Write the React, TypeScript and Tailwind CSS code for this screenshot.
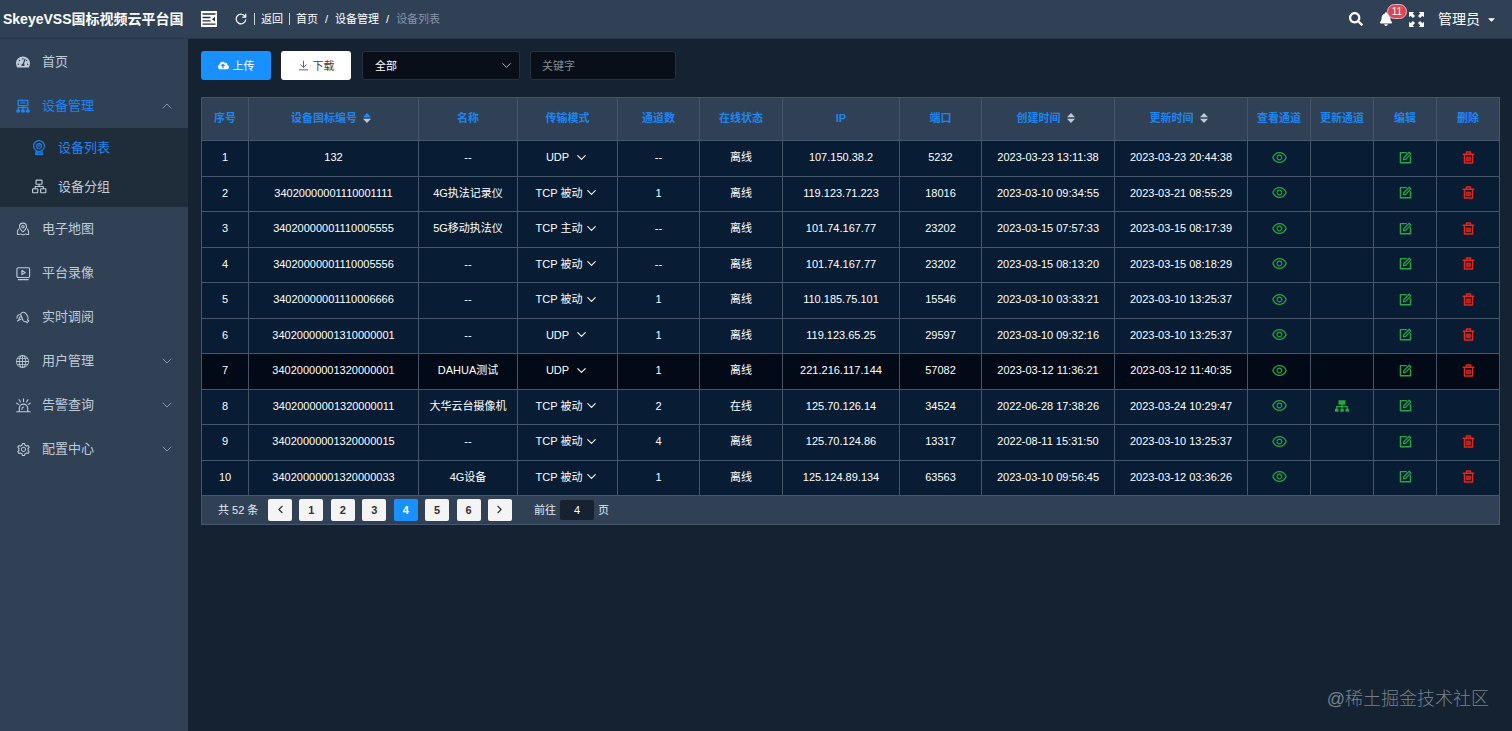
import React, { useState } from 'react';
import { FaBell, FaCaretDown, FaCloudUploadAlt, FaSearch, FaTachometerAlt } from 'react-icons/fa';
import { AiOutlineEye, AiOutlineSetting } from 'react-icons/ai';
import { BsGlobe } from 'react-icons/bs';
import { ChevronDown, ChevronLeft, ChevronRight, ChevronUp } from 'lucide-react';

interface IconProps {
    children: React.ReactNode;
    size?: number;
}

const Icon: React.FC<IconProps> = ({ children, size = 14 }) => (
    <svg
        width={size}
        height={size}
        viewBox="0 0 16 16"
        fill="none"
        stroke="currentColor"
        strokeWidth="1.2"
        strokeLinecap="round"
        strokeLinejoin="round"
        aria-hidden="true"
        className="shrink-0"
    >
        {children}
    </svg>
);

const DeviceIcon = () => (
    <Icon>
        <path d="M2.5 1.5h11v6h-11zM5.5 4.5h5M8 7.5v4.500M2.500 12V9.800h11V12" strokeWidth="1.500" />
        <path d="M1 12.500h3v2.300H1zM6.500 12.500h3v2.300h-3zM12 12.500h3v2.300h-3z" fill="currentColor" />
    </Icon>
);

const WebcamIcon = () => (
    <Icon size={15}>
        <circle cx="7.500" cy="6.500" r="5.800" />
        <circle cx="7.500" cy="6.500" r="2.600" />
        <path d="M6.900 6.200h1.200M4.700 12l-.9 3.300h7.400l-.9-3.300M4 13.600h7" />
    </Icon>
);

const GroupIcon = () => (
    <Icon size={15}>
        <rect x="4.300" y="1.200" width="6.400" height="4.400" rx=".6" />
        <rect x=".6" y="10.400" width="5.600" height="4.200" rx=".6" />
        <rect x="9.200" y="10.400" width="5.600" height="4.200" rx=".6" />
        <path d="M7.500 5.600V8M3.400 10.400V8H12v2.400" />
    </Icon>
);

const MapIcon = () => (
    <Icon>
        <path d="M8 11.300C5.500 9 4 7.300 4 5.300a4 4 0 0 1 8 0c0 2-1.500 3.700-4 6z" />
        <circle cx="8" cy="5.300" r="1.400" />
        <path d="M2.800 8.200C1.700 9.300 1.200 11 1.700 14.200c1.500.4 2.500-.6 3.500-.6 1.200 0 1.800 1 3 1s1.800-1 3-1c1 0 1.800 1 3.200.6.4-3-.1-4.900-1.200-6" />
    </Icon>
);

const RecordIcon = () => (
    <Icon size={15}>
        <rect x="1" y="1.800" width="13.500" height="10.400" rx="1.300" />
        <path d="M6.300 4.800v4.400L9.800 7zM2.500 14.500h10.500" />
    </Icon>
);

const LiveIcon = () => (
    <Icon>
        <path d="M5.200 4.800C6.500 2.300 9.300 1.800 11 3.800l2.300 3.400c1 1.500.9 3-.2 4.200l1.500.9-1.800 2.200-1.300-1.300c-1.300.5-2.600 0-3.400-1.200z" />
        <path d="M4.600 5.200C2.400 5.400 1 7.200 1.200 9.500M5.600 7.800C4 7.900 3.200 9.300 3.600 11.400M1.600 12.600l2-1.200 2.200-.9" />
    </Icon>
);

const AlarmIcon = () => (
    <Icon size={15}>
        <path d="M3.500 14.500V11a4.500 4.500 0 0 1 9 0v3.500M.8 14.600h14.400M6.200 12c0-1.500.7-2.200 1.800-2.400" />
        <path d="M8 .8v2.800M3.300 1.800l1.500 2.400M12.700 1.800l-1.500 2.400M.8 5.500l2.200 1.300M15.200 5.500 13 6.800" />
    </Icon>
);

const RefreshIcon = () => (
    <Icon size={12}>
        <path d="M13.500 4.800A6.400 6.400 0 1 0 14.300 9" strokeWidth="1.600" />
        <path d="M14.300 1.500v4h-4" strokeWidth="1.600" />
    </Icon>
);

const FoldIcon = () => (
    <svg width="16" height="16" viewBox="0 0 16 16" aria-hidden="true">
        <rect width="16" height="16" fill="#fff" />
        <path d="M1.500 3h13M1.500 6.500h8M1.500 9.800h8M1.500 13.200h13" stroke="#233145" strokeWidth="1.300" />
        <path d="M14 5.800v4.800l-3-2.400z" fill="#233145" />
    </svg>
);

const ExpandIcon = () => (
    <svg width="15" height="15" viewBox="0 0 16 16" fill="currentColor" aria-hidden="true">
        <path d="M0 0h5.500L3.900 1.700 6.400 4.200 4.200 6.400 1.700 3.900 0 5.500zM16 0v5.500l-1.700-1.600-2.500 2.500-2.200-2.200 2.500-2.500L10.500 0zM0 16v-5.500l1.700 1.600 2.500-2.500 2.200 2.200-2.500 2.500L5.500 16zM16 16h-5.500l1.600-1.700-2.500-2.500 2.200-2.200 2.500 2.500 1.700-1.600z" />
    </svg>
);

const DownloadIcon = () => (
    <Icon size={11}>
        <path d="M8 1.500v9M4.200 7 8 10.800 11.800 7M2 14.300h12" />
    </Icon>
);

const SitemapIcon = () => (
    <svg width="14" height="14" viewBox="0 0 16 16" fill="currentColor" aria-hidden="true">
        <path d="M4 1.500h8v5H4zM0 11h4v3.500H0zM6 11h4v3.500H6zM12 11h4v3.500h-4z" />
        <path d="M8 6v5M2 11.500V8.800h12v2.700" fill="none" stroke="currentColor" strokeWidth="1.400" />
    </svg>
);

const EditIcon = () => (
    <Icon size={13}>
        <path d="M9 2H1.800v12.500h12.400V7" strokeWidth="1.800" />
        <path d="m5.500 10.800.6-2.800 6.500-6.500 2.100 2.100L8.200 10.200z" strokeWidth="1.500" />
    </Icon>
);

const TrashIcon = () => (
    <Icon size={13}>
        <path d="M1.500 4h13M5.500 3.700V1.300h5v2.400M3 4.200v10.500h10V4.200" strokeWidth="1.700" />
        <path d="M5.800 7.500h4.400v4.500H5.800z" fill="currentColor" fillOpacity=".7" />
    </Icon>
);

const SortIcon = ({ active }: { active?: boolean }) => (
    <svg width="8" height="10" viewBox="0 0 8 10" aria-hidden="true">
        <path d="M4 0l4 4.300H0z" fill={active ? '#1890ff' : '#c0c9d6'} />
        <path d="M4 10l4-4.300H0z" fill="#c0c9d6" />
    </svg>
);

interface Device {
    code: string;
    name: string;
    mode: string;
    channels: string;
    online?: boolean;
    ip: string;
    port: string;
    created: string;
    updated: string;
}

const devices: Device[] = [
    { code: '132', name: '--', mode: 'UDP', channels: '--', ip: '107.150.38.2', port: '5232', created: '2023-03-23 13:11:38', updated: '2023-03-23 20:44:38' },
    { code: '34020000001110001111', name: '4G执法记录仪', mode: 'TCP 被动', channels: '1', ip: '119.123.71.223', port: '18016', created: '2023-03-10 09:34:55', updated: '2023-03-21 08:55:29' },
    { code: '34020000001110005555', name: '5G移动执法仪', mode: 'TCP 主动', channels: '--', ip: '101.74.167.77', port: '23202', created: '2023-03-15 07:57:33', updated: '2023-03-15 08:17:39' },
    { code: '34020000001110005556', name: '--', mode: 'TCP 被动', channels: '--', ip: '101.74.167.77', port: '23202', created: '2023-03-15 08:13:20', updated: '2023-03-15 08:18:29' },
    { code: '34020000001110006666', name: '--', mode: 'TCP 被动', channels: '1', ip: '110.185.75.101', port: '15546', created: '2023-03-10 03:33:21', updated: '2023-03-10 13:25:37' },
    { code: '34020000001310000001', name: '--', mode: 'UDP', channels: '1', ip: '119.123.65.25', port: '29597', created: '2023-03-10 09:32:16', updated: '2023-03-10 13:25:37' },
    { code: '34020000001320000001', name: 'DAHUA测试', mode: 'UDP', channels: '1', ip: '221.216.117.144', port: '57082', created: '2023-03-12 11:36:21', updated: '2023-03-12 11:40:35' },
    { code: '34020000001320000011', name: '大华云台摄像机', mode: 'TCP 被动', channels: '2', online: true, ip: '125.70.126.14', port: '34524', created: '2022-06-28 17:38:26', updated: '2023-03-24 10:29:47' },
    { code: '34020000001320000015', name: '--', mode: 'TCP 被动', channels: '4', ip: '125.70.124.86', port: '13317', created: '2022-08-11 15:31:50', updated: '2023-03-10 13:25:37' },
    { code: '34020000001320000033', name: '4G设备', mode: 'TCP 被动', channels: '1', ip: '125.124.89.134', port: '63563', created: '2023-03-10 09:56:45', updated: '2023-03-12 03:36:26' },
];

const columns = [
    { title: '序号', width: 'w-[47px]' },
    { title: '设备国标编号', width: 'w-[170px]', sort: true, active: true },
    { title: '名称', width: 'w-[99px]' },
    { title: '传输模式', width: 'w-[100px]' },
    { title: '通道数', width: 'w-[82px]' },
    { title: '在线状态', width: 'w-[83px]' },
    { title: 'IP', width: 'w-[117px]' },
    { title: '端口', width: 'w-[82px]' },
    { title: '创建时间', width: 'w-[133px]', sort: true },
    { title: '更新时间', width: 'w-[133px]', sort: true },
    { title: '查看通道', width: 'w-[63px]' },
    { title: '更新通道', width: 'w-[63px]' },
    { title: '编辑', width: 'w-[63px]' },
    { title: '删除', width: 'w-[63px]' },
];

const TopBar = () => (
    <header className="flex h-[39px] items-center border-b border-[#273648] bg-[#304156] text-white">
        <h1 className="w-[188px] shrink-0 overflow-hidden pl-[3px] text-sm font-bold whitespace-nowrap">
            SkeyeVSS国标视频云平台国
        </h1>
        <button aria-label="折叠菜单" className="ml-[13px]">
            <FoldIcon />
        </button>
        <button aria-label="刷新" className="ml-[18px]">
            <RefreshIcon />
        </button>
        <span className="ml-[7px] h-3 w-px bg-slate-300" />
        <a href="#back" className="ml-[6px] text-[11px]">返回</a>
        <span className="ml-[6px] h-3 w-px bg-slate-300" />
        <nav className="ml-[6px] flex items-center gap-[7px] text-[11px]">
            <a href="#home">首页</a>
            <span>/</span>
            <a href="#device">设备管理</a>
            <span>/</span>
            <span className="text-[#8593a8]">设备列表</span>
        </nav>
        <div className="ml-auto flex items-center pr-[15px]">
            <button aria-label="搜索">
                <FaSearch size={14} />
            </button>
            <button aria-label="通知" className="relative ml-4">
                <FaBell size={14} />
                <span className="absolute -top-2 left-2 flex h-[15px] w-5 items-center justify-center rounded-full border border-[#e9b9c0] bg-[#dc4654] text-[10px] leading-none">
                    11
                </span>
            </button>
            <button aria-label="全屏" className="ml-4">
                <ExpandIcon />
            </button>
            <button className="ml-[14px] flex items-center gap-[6px] text-sm">
                管理员
                <FaCaretDown size={11} />
            </button>
        </div>
    </header>
);

interface MenuItemProps {
    icon: React.ReactNode;
    label: string;
    active?: boolean;
    arrow?: 'up' | 'down';
}

const MenuItem: React.FC<MenuItemProps> = ({ icon, label, active, arrow }) => (
    <a
        href="#menu"
        className={`flex h-11 items-center pr-[13px] pl-4 ${active ? 'text-[#1f85f0]' : 'text-[#bfcbd9]'}`}
    >
        <span className="flex w-[26px] items-center">{icon}</span>
        <span>{label}</span>
        {arrow === 'up' && <ChevronUp size={16} strokeWidth={1.300} className="ml-auto text-[#98a4b4]" />}
        {arrow === 'down' && <ChevronDown size={16} strokeWidth={1.300} className="ml-auto text-[#98a4b4]" />}
    </a>
);

const Sidebar = () => (
    <aside className="w-[188px] shrink-0 bg-[#304156] pt-px text-[13px]">
        <MenuItem icon={<FaTachometerAlt size={14} />} label="首页" />
        <MenuItem icon={<DeviceIcon />} label="设备管理" active arrow="up" />
        <div className="bg-[#1f2d3b] pb-px">
            <a href="#list" className="flex h-[39px] items-center pl-8 text-[#1f85f0]">
                <span className="flex w-[26px] items-center"><WebcamIcon /></span>
                设备列表
            </a>
            <a href="#group" className="flex h-[39px] items-center pl-8 text-[#bfcbd9]">
                <span className="flex w-[26px] items-center"><GroupIcon /></span>
                设备分组
            </a>
        </div>
        <MenuItem icon={<MapIcon />} label="电子地图" />
        <MenuItem icon={<RecordIcon />} label="平台录像" />
        <MenuItem icon={<LiveIcon />} label="实时调阅" />
        <MenuItem icon={<BsGlobe size={13} />} label="用户管理" arrow="down" />
        <MenuItem icon={<AlarmIcon />} label="告警查询" arrow="down" />
        <MenuItem icon={<AiOutlineSetting size={15} />} label="配置中心" arrow="down" />
    </aside>
);

const Toolbar = () => (
    <div className="flex items-center">
        <button className="flex h-[29px] w-[70px] items-center justify-center gap-1 rounded-[3px] bg-[#1890ff] text-white">
            <FaCloudUploadAlt size={11} />
            上传
        </button>
        <button className="ml-[10px] flex h-[29px] w-[70px] items-center justify-center gap-1 rounded-[3px] bg-white text-[#444]">
            <DownloadIcon />
            下载
        </button>
        <div className="relative ml-[11px]">
            <select
                aria-label="状态"
                className="h-[29px] w-[158px] appearance-none rounded-[3px] border border-[#26323f] bg-[#080f19] px-3 text-white"
            >
                <option>全部</option>
                <option>在线</option>
                <option>离线</option>
            </select>
            <ChevronDown size={15} strokeWidth={1.500} className="pointer-events-none absolute top-[7px] right-[6px] text-[#c0c4cc]" />
        </div>
        <input
            aria-label="关键字"
            placeholder="关键字"
            className="ml-[10px] h-[29px] w-[146px] rounded-[3px] border border-[#26323f] bg-[#080f19] px-[11px] text-white placeholder:text-[#848a93]"
        />
    </div>
);

const cell = 'border border-[#45566b] p-0 pb-[2px]';

const DeviceTable = () => (
    <table className="h-[399px] w-full table-fixed border-collapse text-center whitespace-nowrap text-white">
        <thead>
            <tr className="h-[43px] bg-[#304156] text-[#1f85f0]">
                {columns.map((col) => (
                    <th key={col.title} className={`${cell} ${col.width} font-bold`}>
                        <span className={`flex items-center justify-center gap-[6px] ${col.sort ? 'pr-[5px]' : ''}`}>
                            {col.title}
                            {col.sort && <SortIcon active={col.active} />}
                        </span>
                    </th>
                ))}
            </tr>
        </thead>
        <tbody>
            {devices.map((d, i) => (
                <tr key={d.code} className={i === 6 ? 'bg-[#020a17]' : 'bg-[#081d33]'}>
                    <td className={cell}>{i + 1}</td>
                    <td className={cell}>{d.code}</td>
                    <td className={cell}>{d.name}</td>
                    <td className={cell}>
                        <button className={`inline-flex items-center ${d.mode === 'UDP' ? 'gap-[5px]' : 'gap-[2px]'}`}>
                            {d.mode}
                            <ChevronDown size={15} strokeWidth={1.700} />
                        </button>
                    </td>
                    <td className={cell}>{d.channels}</td>
                    <td className={cell}>{d.online ? '在线' : '离线'}</td>
                    <td className={cell}>{d.ip}</td>
                    <td className={cell}>{d.port}</td>
                    <td className={cell}>{d.created}</td>
                    <td className={cell}>{d.updated}</td>
                    <td className={cell}>
                        <button aria-label="查看通道" className="mx-auto block text-[#28a745]">
                            <AiOutlineEye size={17} />
                        </button>
                    </td>
                    <td className={cell}>
                        {d.online && (
                            <button aria-label="更新通道" className="mx-auto block text-[#28a745]">
                                <SitemapIcon />
                            </button>
                        )}
                    </td>
                    <td className={cell}>
                        <button aria-label="编辑" className="mx-auto block text-[#28a745]">
                            <EditIcon />
                        </button>
                    </td>
                    <td className={cell}>
                        {!d.online && (
                            <button aria-label="删除" className="mx-auto block text-[#e8261c]">
                                <TrashIcon />
                            </button>
                        )}
                    </td>
                </tr>
            ))}
        </tbody>
    </table>
);

const Pagination = () => {
    const [page, setPage] = useState(4);
    const item = 'flex h-[22px] w-6 items-center justify-center rounded-xs';

    return (
        <div className="flex h-[29px] items-center border border-t-0 border-[#45566b] bg-[#304156] pb-px pl-4 text-[#e5eaf0]">
            <span className="w-[50px]">共 52 条</span>
            <div className="flex w-[244px] justify-between font-bold text-[#303133]">
                <button aria-label="上一页" className={`${item} bg-[#f4f4f5]`} onClick={() => setPage(Math.max(1, page - 1))}>
                    <ChevronLeft size={13} strokeWidth={2} />
                </button>
                {[1, 2, 3, 4, 5, 6].map((n) => (
                    <button
                        key={n}
                        onClick={() => setPage(n)}
                        className={`${item} ${n === page ? 'bg-[#1890ff] text-white' : 'bg-[#f4f4f5]'}`}
                    >
                        {n}
                    </button>
                ))}
                <button aria-label="下一页" className={`${item} bg-[#f4f4f5]`} onClick={() => setPage(Math.min(6, page + 1))}>
                    <ChevronRight size={13} strokeWidth={2} />
                </button>
            </div>
            <label className="ml-[22px] flex items-center gap-1">
                前往
                <input
                    value={page}
                    onChange={(e) => setPage(Number(e.target.value) || 1)}
                    className="h-5 w-[34px] rounded-xs bg-[#172230] text-center text-white"
                />
                页
            </label>
        </div>
    );
};

export default function App() {
    return (
        <div className="relative flex min-h-screen flex-col bg-[#152231] font-['Liberation_Sans','Noto_Sans_CJK_SC',sans-serif]">
            <TopBar />
            <div className="flex flex-1">
                <Sidebar />
                <main className="min-w-0 flex-1 pt-3 pr-3 pl-[13px] text-[11px] leading-4">
                    <Toolbar />
                    <div className="mt-[17px]">
                        <DeviceTable />
                        <Pagination />
                    </div>
                </main>
            </div>
            <p className="absolute right-[23px] bottom-[18px] text-lg font-light text-[#76808b]">@稀土掘金技术社区</p>
        </div>
    );
}
